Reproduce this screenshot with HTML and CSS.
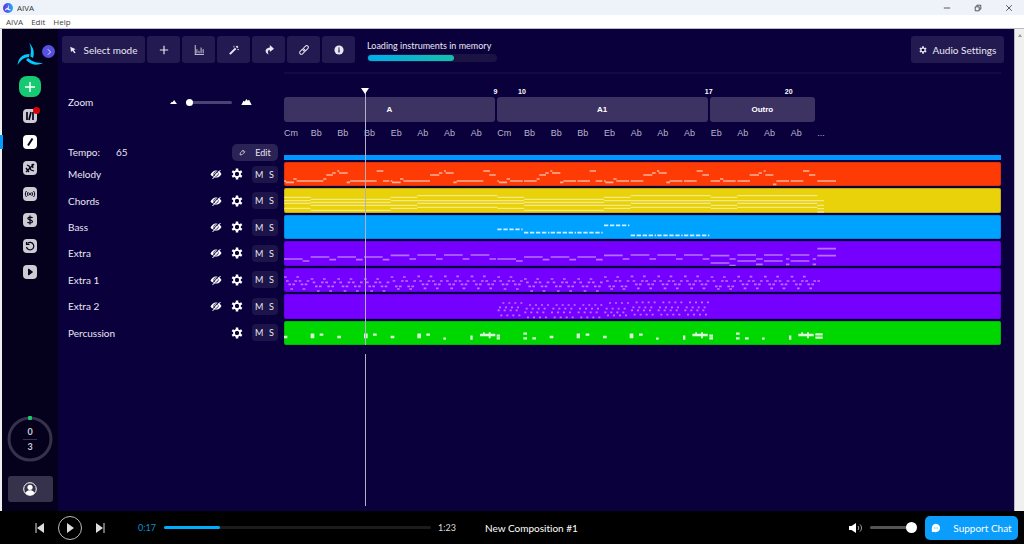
FILE: index.html
```
<!DOCTYPE html>
<html lang="en">
<head>
    <meta charset="UTF-8">
    <meta name="viewport" content="width=device-width, initial-scale=1.0">
    <title>AIVA</title>
    <link rel="stylesheet" href="styles.css">
</head>
<body>

<!-- Shared icons -->
<svg class="defs" aria-hidden="true">
    <symbol id="gear" viewBox="0 0 24 24">
        <path fill="none" stroke="currentColor" stroke-width="4" d="M12 5.500l5.600 3.250v6.500L12 18.500l-5.600-3.250v-6.500z"/>
        <path fill="none" stroke="currentColor" stroke-width="5" d="M12 1v5M12 18v5M2.500 6.500l4.300 2.500M17.200 15l4.300 2.500M21.500 6.500l-4.300 2.500M6.800 15l-4.300 2.500"/>
        <circle cx="12" cy="12" r="4" fill="#0a003c"/>
    </symbol>
    <symbol id="hide" viewBox="0 0 24 20">
        <path fill="currentColor" d="M1 11C5 4 9 3 12 3s8 1 11 7c-3 6-8 7-11 7S4 16 1 11z"/>
        <circle cx="12" cy="10" r="4.500" fill="none" stroke="#0a003c" stroke-width="1.500"/>
        <path stroke="#0a003c" stroke-width="2" d="M4 17L19 1"/>
        <path stroke="currentColor" stroke-width="2" d="M5 20L21 2"/>
    </symbol>
</svg>

<header class="titlebar">
    <svg class="app-icon" viewBox="0 0 20 20">
        <defs>
            <linearGradient id="appfill" x1="0" x2="1"><stop offset="0" stop-color="#6a2be8"/><stop offset="1" stop-color="#1fb0f5"/></linearGradient>
        </defs>
        <circle cx="10" cy="10" r="10" fill="url(#appfill)"/>
        <path fill="#fff" d="M10 3c2 3 2 5 1 8l5 3c-3 1-5 0-7-1-2 0-3 1-5 2 0-3 2-5 5-5 1-2 2-4 1-7z"/>
    </svg>
    <span class="app-name">AIVA</span>
    <div class="window-buttons">
        <button aria-label="Minimize"><svg viewBox="0 0 10 10"><path d="M1 5h8"/></svg></button>
        <button aria-label="Restore"><svg viewBox="0 0 10 10"><path d="M1.500 3.500h5v5h-5zM3.500 3V1.500h5v5H7"/></svg></button>
        <button aria-label="Close"><svg viewBox="0 0 10 10"><path d="M1.500 1.500l7 7M8.500 1.500l-7 7"/></svg></button>
    </div>
</header>

<nav class="menubar">
    <a href="#">AIVA</a>
    <a href="#">Edit</a>
    <a href="#">Help</a>
</nav>

<div class="app">
    <aside class="sidebar">
        <div class="logo">
            <svg viewBox="0 0 52 48">
                <path fill="#0cf" d="M24 1c8 9 12 18 8 31l-5-3c1-10 2-18-3-28z"/>
                <path fill="#0cf" d="M1 46c2-14 9-22 24-22l-1 6C13 31 8 36 1 46z"/>
                <path fill="#0cf" d="M52 42c-12 6-24 4-34-6l4-4c9 8 18 10 30 10z"/>
            </svg>
            <button class="expand" aria-label="Expand menu"><svg viewBox="0 0 10 10"><path d="M3.500 1.500L7 5 3.500 8.500"/></svg></button>
        </div>
        <button class="create" aria-label="Create"><svg viewBox="0 0 12 12"><path d="M6 1v10M1 6h10"/></svg></button>
        <div class="side-links">
            <button aria-label="Library"><svg viewBox="0 0 14 14"><path stroke-width="1.700" d="M4 3v8M6 11l2-8M10 3v8"/></svg><i class="dot"></i></button>
            <button class="active" aria-label="Editor"><svg viewBox="0 0 14 14"><path stroke-width="2" d="M5 10.500L9.500 3.500"/></svg></button>
            <button aria-label="Styles"><svg viewBox="0 0 14 14"><path stroke-width="1.300" d="M3 11l8-8M4 4l2 1 2 4 3 1M3 7l3 4M9 3l1 4"/></svg></button>
            <button aria-label="Radio"><svg viewBox="0 0 14 14"><path d="M3.500 4c-1.600 1.800-1.600 4.200 0 6M5.300 5c-1 1.200-1 2.800 0 4M10.500 4c1.600 1.800 1.600 4.200 0 6M8.700 5c1 1.200 1 2.800 0 4"/><circle cx="7" cy="7" r=".8"/></svg></button>
            <button aria-label="Pricing"><svg viewBox="0 0 14 14"><path stroke-width="1.200" d="M9.500 5C9 3.800 5 3.500 4.800 5.300 4.800 7.500 9.500 6.300 9.500 8.700 9.300 10.500 5 10.300 4.500 9M7 2.500v9"/></svg></button>
            <button aria-label="History"><svg viewBox="0 0 14 14"><path stroke-width="1.200" d="M4.500 4.500a3.700 3.700 0 1 1-1 3.500M3.500 3v2.500H6.500"/></svg></button>
            <button aria-label="Tutorials"><svg viewBox="0 0 14 14"><path fill="currentColor" d="M5.500 4v6L9.500 7z"/></svg></button>
        </div>
        <div class="quota">
            <svg viewBox="0 0 46 46"><circle cx="23" cy="23" r="21" fill="none" stroke="#37324b" stroke-width="3"/><rect x="21" y="0" width="4" height="4" rx="1" fill="#1bc96f"/></svg>
            <span class="used">0</span>
            <span>3</span>
        </div>
        <button class="account" aria-label="Account">
            <svg viewBox="0 0 14 14"><circle cx="7" cy="7" r="6.300" fill="none" stroke="#fff"/><circle cx="7" cy="5.300" r="2.600" fill="#fff"/><path fill="#fff" d="M2.300 11c1.500-2.200 3-2.700 4.700-2.700s3.200.5 4.700 2.700c-2 3-7.400 3-9.400 0z"/></svg>
        </button>
    </aside>

    <main class="editor">
        <div class="toolbar">
            <button class="tool wide"><svg viewBox="0 0 12 12"><path fill="currentColor" d="M2 1l8 4-3 1 3 4-2 1-3-4-2 2z"/></svg>Select mode</button>
            <button class="tool" aria-label="Add"><svg viewBox="0 0 12 12"><path fill="none" stroke="currentColor" stroke-width="1.400" d="M6 1v10M1 6h10"/></svg></button>
            <button class="tool" aria-label="Velocity"><svg viewBox="0 0 12 12"><path fill="none" stroke="currentColor" d="M1.500 0v11.500M3.500 5v5M6 7v3M8.500 3v7M11 5v5M1 11.500h11"/></svg></button>
            <button class="tool" aria-label="Magic"><svg viewBox="0 0 12 12"><path fill="none" stroke="currentColor" stroke-width="2.400" d="M1 11L8 4M9 3l1.500-1.500"/><path stroke="currentColor" d="M6 1v2M10 5.500h2"/></svg></button>
            <button class="tool" aria-label="Redo"><svg viewBox="0 0 12 12"><path fill="currentColor" d="M7 0l5 4.500L7 8.500V6C4.500 6 4 8 5.500 11.500 1 9.500 0 4 7 3z"/></svg></button>
            <button class="tool" aria-label="Link"><svg viewBox="0 0 12 12"><g fill="none" stroke="currentColor" stroke-width="1.200" transform="rotate(-45 6 6)"><rect x="-.5" y="4" width="7.500" height="4" rx="2"/><rect x="5" y="4" width="7.500" height="4" rx="2"/></g></svg></button>
            <button class="tool" aria-label="Info"><svg viewBox="0 0 12 12"><circle cx="6" cy="6" r="5.500" fill="currentColor"/><path stroke="#221a50" stroke-width="1.500" d="M6 5.200V9M6 3v1.400"/></svg></button>
            <div class="loading">
                <span id="loading-label">Loading instruments in memory</span>
                <div class="loading-bar" role="progressbar" aria-labelledby="loading-label" aria-valuenow="67"><div class="loading-fill"></div></div>
            </div>
            <button class="tool settings"><svg viewBox="0 0 24 24"><use href="#gear"/></svg>Audio Settings</button>
        </div>

        <div class="timeline">
            <div class="row ruler">
                <div class="head zoom">
                    <label for="zoom">Zoom</label>
                    <svg class="hill small" viewBox="0 0 12 7"><path d="M0 7l3-4 1.500 1L7 0l5 7z"/></svg>
                    <input type="range" id="zoom" min="0" max="100" value="0">
                    <svg class="hill" viewBox="0 0 12 7"><path d="M0 7l2.500-5 1.500 1 2-3 1.500 2L9 1l3 6z"/></svg>
                </div>
                <div class="lane-top">
                    <div class="bars">
                        <span class="bar-9">9</span><span class="bar-10">10</span><span class="bar-17">17</span><span class="bar-20">20</span>
                    </div>
                    <div class="sections">
                        <button>A</button><button>A1</button><button>Outro</button>
                    </div>
                    <div class="chord-names">
                        <span>Cm</span><span>Bb</span><span>Bb</span><span>Bb</span><span>Eb</span><span>Ab</span><span>Ab</span><span>Ab</span>
                        <span>Cm</span><span>Bb</span><span>Bb</span><span>Bb</span><span>Eb</span><span>Ab</span><span>Ab</span><span>Ab</span>
                        <span>Eb</span><span>Ab</span><span>Ab</span><span>Ab</span><span class="more">...</span>
                    </div>
                </div>
            </div>
            <div class="row tempo">
                <div class="head">
                    <span class="tempo-label">Tempo:</span><span>65</span>
                    <button class="edit"><svg viewBox="0 0 10 10"><path fill="none" stroke="currentColor" d="M1.500 8.500l.5-3 4-4L8.500 4l-4 4zM5 2.500L7.500 5"/></svg>Edit</button>
                </div>
                <div class="tempo-line"></div>
            </div>
            <div class="tracks" id="tracks"></div>
            <div class="playhead"><i></i></div>
            <div class="playhead-lower"></div>
        </div>
    </main>
    <div class="scrollbar"><i></i></div>
</div>

<footer class="player">
    <button class="skip" aria-label="Previous"><svg viewBox="0 0 10 12"><path d="M1 1v10" stroke="currentColor"/><path fill="currentColor" d="M9 1v10L2 6z"/></svg></button>
    <button class="play" aria-label="Play"><svg viewBox="0 0 10 12"><path fill="currentColor" d="M2 1v10l7-5z"/></svg></button>
    <button class="skip" aria-label="Next"><svg viewBox="0 0 10 12"><path d="M9 1v10" stroke="currentColor"/><path fill="currentColor" d="M1 1v10l7-5z"/></svg></button>
    <span class="now">0:17</span>
    <div class="seek"><div class="seek-fill"></div></div>
    <span class="total">1:23</span>
    <span class="song">New Composition #1</span>
    <svg class="speaker" viewBox="0 0 14 10"><path fill="#fff" d="M0 3h2.500L7 0v10L2.500 7H0z"/><path fill="none" stroke="#aaa" d="M9 3c1 1.200 1 2.800 0 4M11 1.500c2 2 2 5 0 7"/></svg>
    <input type="range" class="volume" aria-label="Volume" min="0" max="100" value="100">
    <button class="support"><svg viewBox="0 0 12 12"><path fill="#fff" d="M6 1a5 5 0 1 1-2.500 9.400L1 11V6a5 5 0 0 1 5-5z"/><path stroke="#0a9dfb" stroke-dasharray="1 1" d="M3.500 6h5"/></svg>Support Chat</button>
</footer>

<script src="script.js"></script>
</body>
</html>
```
FILE: styles.css
```
* {
    box-sizing: border-box;
}
body {
    margin: 0;
    min-height: 100vh;
    display: flex;
    flex-direction: column;
    font-family: Lato, sans-serif;
    font-size: 10px;
    font-variant-ligatures: none;
    color: #e9e7f2;
    background-color: #000;
}
button {
    font: inherit;
    font-variant-ligatures: none;
    color: inherit;
    border: none;
    padding: 0;
    background: none;
    cursor: pointer;
    display: flex;
    align-items: center;
    justify-content: center;
}
svg {
    display: block;
    flex: none;
}
.defs {
    position: absolute;
    width: 0;
    height: 0;
}

/* Window chrome */
.titlebar {
    display: flex;
    align-items: center;
    height: 15px;
    padding: 0 11px 0 3px;
    background-color: #edf3f8;
    color: #333;
    font-family: "Open Sans", sans-serif;
    font-size: 8px;
}
.app-icon {
    width: 10px;
    height: 10px;
    margin-right: 4px;
}
.window-buttons {
    display: flex;
    gap: 23px;
    margin-left: auto;
}
.window-buttons svg {
    width: 8px;
    height: 8px;
    fill: none;
    stroke: #333;
}
.menubar {
    display: flex;
    align-items: center;
    gap: 8px;
    height: 14px;
    padding-left: 6px;
    background-color: #fff;
    border-bottom: 1px solid #b9bcc4;
    font-family: "Open Sans", sans-serif;
    font-size: 8px;
}
.menubar a {
    color: #444;
    text-decoration: none;
}

.app {
    flex: 1;
    display: flex;
    border-left: 2px solid #eef0f0;
}

/* Sidebar */
.sidebar {
    width: 56px;
    display: flex;
    flex-direction: column;
    align-items: center;
    padding: 13px 0 9px;
    background-color: #05001c;
}
.logo {
    position: relative;
    width: 26px;
}
.logo > svg {
    width: 26px;
    height: 24px;
}
.expand {
    position: absolute;
    top: 3px;
    left: 25px;
    width: 13px;
    height: 13px;
    border-radius: 50%;
    background-color: #5750e0;
}
.expand svg {
    width: 8px;
    height: 8px;
    fill: none;
    stroke: #fff;
}
.create {
    width: 22px;
    height: 21px;
    margin-top: 10px;
    border-radius: 8px;
    background-color: #17c973;
}
.create svg {
    width: 12px;
    height: 12px;
    fill: none;
    stroke: #fff;
    stroke-width: 1.500;
}
.side-links {
    width: 100%;
    display: flex;
    flex-direction: column;
    margin-top: 6px;
}
.side-links button {
    position: relative;
    height: 26px;
}
.side-links svg {
    width: 14px;
    height: 14px;
    border-radius: 4px;
    background-color: #cdccd3;
    color: #05001c;
    fill: none;
    stroke: #05001c;
}
.side-links .active svg {
    background-color: #fff;
}
.side-links .active::before {
    content: "";
    position: absolute;
    left: -2px;
    top: 6px;
    width: 3px;
    height: 14px;
    background-color: #009dff;
}
.dot {
    position: absolute;
    top: 4px;
    left: 31px;
    width: 7px;
    height: 7px;
    border-radius: 50%;
    background-color: #d60505;
}
.quota {
    position: relative;
    display: flex;
    flex-direction: column;
    align-items: center;
    justify-content: center;
    width: 46px;
    height: 46px;
    margin-top: auto;
    font-size: 9px;
    font-weight: bold;
    line-height: 14px;
    color: #cfcdd8;
}
.quota svg {
    position: absolute;
    top: 0;
    left: 0;
    width: 46px;
    height: 46px;
}
.used {
    width: 14px;
    text-align: center;
    border-bottom: 1px solid #37324b;
}
.account {
    width: 45px;
    height: 26px;
    margin-top: 14px;
    border-radius: 3px;
    background-color: #37324b;
}
.account svg {
    width: 14px;
    height: 14px;
}

/* Editor */
.editor {
    flex: 1;
    min-width: 0;
    background-color: #0a003c;
}
.toolbar {
    display: flex;
    align-items: flex-start;
    gap: 2px;
    padding: 7px 10px 9px 4px;
}
.tool {
    width: 33px;
    height: 27px;
    border-radius: 3px;
    background-color: #221a50;
    white-space: nowrap;
}
.tool svg {
    width: 10px;
    height: 10px;
}
.tool.wide {
    width: 83px;
}
.tool.wide svg {
    width: 8px;
    height: 8px;
    margin-right: 6px;
}
.tool.settings {
    width: 93px;
    margin-left: auto;
}
.tool.settings svg {
    width: 8px;
    height: 8px;
    margin-right: 6px;
}
.loading {
    width: 130px;
    margin: 3px 0 0 10px;
    font-size: 9px;
    line-height: 13px;
    white-space: nowrap;
}
.loading-bar {
    height: 8px;
    padding: 1px;
    border-radius: 4px;
    background-color: #1b1344;
    margin-top: 2px;
}
.loading-fill {
    width: 67%;
    height: 6px;
    border-radius: 3px;
    background: linear-gradient(to right, #00aeea, #12bfae);
}
.timeline {
    position: relative;
    padding-right: 13px;
}
.row {
    display: flex;
}
.head {
    width: 226px;
    flex: none;
    display: flex;
    align-items: center;
    padding: 0 6px 0 10px;
}
.zoom {
    align-self: flex-start;
    height: 14px;
    margin-top: 23px;
}
.zoom label {
    width: 102px;
}
.hill {
    width: 11px;
    height: 6px;
    fill: #fff;
}
.hill.small {
    width: 7px;
    height: 4px;
}
input[type="range"] {
    appearance: none;
    width: 46px;
    height: 12px;
    margin: 0 9px;
    background: none;
}
input[type="range"]::-webkit-slider-runnable-track {
    height: 3px;
    border-radius: 2px;
    background-color: #4b4374;
}
input[type="range"]::-webkit-slider-thumb {
    appearance: none;
    width: 7px;
    height: 7px;
    margin-top: -2px;
    border-radius: 50%;
    background-color: #fff;
}
.lane-top {
    flex: 1;
    height: 71px;
    padding-top: 13px;
    border-top: 2px solid #130a43;
    font-family: "Liberation Sans", sans-serif;
}
.bars {
    display: grid;
    grid-template-columns: repeat(42, 1fr);
    width: 560px;
    margin-left: -2px;
    font-size: 7px;
    font-weight: bold;
    line-height: 10px;
    text-align: center;
    color: #fff;
}
.bar-9 {
    grid-column: 16 / 18;
}
.bar-10 {
    grid-column: 18 / 20;
}
.bar-17 {
    grid-column: 32 / 34;
}
.bar-20 {
    grid-column: 38 / 40;
}
.sections {
    display: grid;
    grid-template-columns: 8fr 8fr 4fr;
    gap: 2px;
    width: 531px;
}
.sections button {
    height: 25px;
    border-radius: 3px;
    background-color: #3d3363;
    color: #fff;
    font-size: 8px;
    font-weight: bold;
}
.chord-names {
    display: grid;
    grid-template-columns: repeat(21, 1fr);
    width: 560px;
    margin-top: 5px;
    font-size: 9px;
    line-height: 12px;
    color: #b9b5cb;
}
.tempo {
    height: 18px;
    margin-bottom: 1px;
}
.tempo-label {
    width: 48px;
}
.edit {
    width: 46px;
    height: 17px;
    gap: 9px;
    margin-left: auto;
    border-radius: 5px;
    background-color: #2b2355;
    font-size: 9px;
}
.edit svg {
    width: 7px;
    height: 7px;
}
.tempo-line {
    flex: 1;
    align-self: flex-end;
    height: 5px;
    margin-bottom: 1px;
    background-color: #0096ff;
}
.tracks {
    display: grid;
    grid-template-rows: repeat(7, minmax(0, 1fr));
    height: 185px;
}
.tracks .row {
    padding-bottom: 2px;
}
.track-name {
    flex: 1;
}
.icon-button {
    width: 12px;
    margin-right: 9px;
    color: #fff;
}
.icon-button svg {
    width: 12px;
    height: 12px;
}
.mute-solo {
    display: flex;
    justify-content: space-between;
    width: 26px;
    height: 17px;
    padding: 0 4px 0 3px;
    border-radius: 4px;
    background-color: #1d154a;
    font-size: 9px;
}
.lane {
    flex: 1;
    min-width: 0;
    border-radius: 2px;
    overflow: hidden;
    box-shadow: inset 0 0 0 1px rgba(0, 0, 80, 0.15);
}
.lane svg {
    width: 717px;
    height: 25px;
}
.lane path {
    fill: none;
    stroke: #fff;
    stroke-width: 5;
    stroke-opacity: 0.6;
}
.melody {
    background-color: #ff3b05;
}
.chords {
    background-color: #e9d20a;
}
.chords path {
    stroke-width: 4;
    stroke-opacity: 0.5;
}
.bass {
    background-color: #00a2ff;
}
.bass path {
    stroke-dasharray: 13 5;
    stroke-opacity: 0.8;
}
.extra {
    background-color: #7600ff;
}
.extra path {
    stroke-opacity: 0.45;
}
.percussion {
    background-color: #00d600;
}
.percussion path {
    stroke-width: 7;
    stroke-opacity: 0.85;
}
.playhead,
.playhead-lower {
    position: absolute;
    left: 307px;
    width: 1px;
    background-color: #b3afc6;
}
.playhead {
    top: 16px;
    height: 257px;
}
.playhead i {
    position: absolute;
    top: 0;
    left: -4px;
    border: 4px solid transparent;
    border-top: 6px solid #fff;
    border-bottom: none;
}
.playhead-lower {
    top: 282px;
    height: 152px;
}
.scrollbar {
    width: 10px;
    padding: 5px 0 0 3px;
    border-left: 1px solid #b9bcc4;
    background-color: #f0f0f0;
}
.scrollbar i {
    display: block;
    width: 4px;
    border: 2px solid transparent;
    border-top: none;
    border-bottom: 3px solid #999;
}

/* Player */
.player {
    display: flex;
    align-items: center;
    height: 33px;
    padding: 0 6px 0 35px;
    color: #ddd;
}
.skip svg,
.play svg {
    width: 10px;
    height: 12px;
}
.play {
    width: 24px;
    height: 24px;
    margin: 0 13px;
    border: 1px solid #bbb;
    border-radius: 50%;
}
.now {
    width: 19px;
    margin-left: 33px;
    font-size: 9px;
    color: #0a8fd0;
}
.seek {
    flex: 1;
    max-width: 267px;
    height: 3px;
    margin: 0 7px;
    border-radius: 2px;
    background-color: #1c1c1c;
}
.seek-fill {
    width: 21%;
    height: 3px;
    border-radius: 2px;
    background-color: #00aeff;
}
.total {
    font-size: 9px;
    width: 47px;
}
.song {
    color: #fff;
}
.speaker {
    width: 14px;
    height: 10px;
    margin-left: auto;
}
input.volume {
    width: 47px;
    margin: 0 8px 0 7px;
}
input.volume::-webkit-slider-runnable-track {
    background-color: #555;
}
input.volume::-webkit-slider-thumb {
    width: 11px;
    height: 11px;
    margin-top: -4px;
}
.support {
    gap: 12px;
    width: 93px;
    height: 24px;
    border-radius: 5px;
    background-color: #0a9dfb;
    color: #fff;
    white-space: nowrap;
}
.support svg {
    width: 10px;
    height: 10px;
}
```
FILE: script.js
```
// One bar is 80 units wide. A note is [start, pitch offset, length].
const BAR = 80;

function toPath(notes) {
    return notes.map(([x, y, w]) => `M${x} ${y}h${w}`).join('');
}

// Repeats a figure over a range of bars, rows[i] holds the starts played at pitches[i]
function figure(from, to, pitches, rows, length) {
    const notes = [];
    for (let bar = from; bar < to; bar++) {
        pitches.forEach((y, i) => rows[i].forEach((x) => notes.push([bar * BAR + x, y, length])));
    }
    return notes;
}

const melody = [
    [0, 57, 6], [5, 61, 25], [28, 51, 10], [38, 57, 80], [118, 51, 9], [127, 39, 20], [145, 33, 10], [160, 27, 6],
    [165, 33, 26], [188, 61, 10], [198, 57, 80], [278, 27, 20], [297, 57, 19], [320, 57, 5], [324, 61, 26],
    [348, 51, 10], [358, 57, 80], [438, 39, 28], [465, 33, 10], [480, 27, 6], [485, 33, 24], [508, 61, 10],
    [518, 57, 80], [598, 27, 20], [616, 39, 19], [640, 57, 5], [645, 61, 24], [668, 51, 10], [678, 57, 38],
    [720, 57, 38], [758, 51, 9], [766, 39, 20], [784, 33, 10], [799, 27, 6], [804, 33, 25], [828, 61, 10],
    [838, 57, 38], [880, 57, 38], [917, 27, 19], [935, 57, 20], [960, 57, 5], [964, 61, 24], [988, 51, 10],
    [997, 57, 38], [1040, 57, 38], [1078, 39, 27], [1104, 33, 11], [1119, 27, 7], [1124, 33, 24], [1147, 61, 11],
    [1157, 57, 38], [1200, 57, 38], [1238, 27, 18], [1255, 39, 20], [1280, 57, 28], [1308, 51, 10], [1317, 57, 38],
    [1360, 57, 38], [1397, 39, 28], [1424, 33, 10], [1439, 27, 6], [1444, 39, 24], [1467, 67, 10], [1477, 57, 38],
    [1520, 57, 38], [1557, 27, 19], [1575, 39, 19], [1600, 57, 56]
];

const cm = [28, 38, 46, 61];
const bb = [34, 43, 52, 67];
const eb = [28, 38, 52, 61];
const ab = [23, 38, 46, 58];
const chords = [
    [0, 1, cm], [1, 4, bb], [4, 5, eb], [5, 8, ab], [8, 9, cm], [9, 12, bb], [12, 13, eb], [13, 16, ab],
    [16, 17, eb], [17, 20, ab], [20, 20.25, [38, 52, 62, 72]]
].flatMap(([from, to, pitches]) => pitches.map((y) => [from * BAR, y, (to - from) * BAR]));

const bass = [43, 53, 53, 53, 31, 61, 61, 61].map((y, i) => [(8 + i) * BAR, y, 76]);

const extra = [];
[0, 8].forEach((first) => {
    [[54, 60], [48, 56], [48, 56], [48, 56], [43, 54], [42, 54], [42, 54], [42, 54]].forEach(([a, b], i) => {
        const x = (first + i) * BAR;
        extra.push([x, a, 56], [x + 56, b, 20]);
    });
});
extra.push([1280, 44, 56], [1280, 66, 56], [1336, 54, 19], [1336, 74, 19]);
[[1360, 56, 20], [1440, 66, 10], [1520, 66, 10]].forEach(([x, at, w]) => {
    extra.push([x, 42, 56], [x, 60, 56], [x + at, 54, w], [x + at, 70, w]);
});
extra.push([1600, 23, 56], [1600, 44, 56]);

const arp = [[0, 37], [6, 31, 44, 68], [13, 25, 50, 62], [19, 56]];
const extra1 = [
    [0, 1, [27, 39, 49, 63]], [1, 4, [33, 43, 55, 69]], [4, 5, [27, 39, 55, 63]], [5, 8, [25, 39, 49, 61]],
    [8, 9, [27, 39, 49, 63]], [9, 12, [33, 43, 55, 69]], [12, 13, [27, 39, 55, 63]], [13, 16, [25, 39, 49, 61]],
    [16, 17, [27, 39, 55, 63]], [17, 20, [26, 39, 49, 61]]
].flatMap(([from, to, pitches]) => figure(from, to, pitches, arp, 8));
extra1.push([1600, 39, 8]);

const fast = [[15, 33, 51, 69], [5, 23, 41, 59], [1, 19, 37, 55], [9, 27, 45, 63]];
const extra2 = [
    [8, 9, [27, 40, 49, 64]], [9, 12, [33, 44, 55, 70]], [12, 13, [27, 44, 55, 64]], [13, 16, [25, 40, 49, 62]]
].flatMap(([from, to, pitches]) => figure(from, to, pitches, fast, 6));

const fill = [[588, 42, 46], [597, 37, 5], [614, 37, 6], [614, 48, 6]];
const percussion = [
    [0, 48, 10], [80, 41, 11], [80, 48, 11], [107, 41, 11], [160, 48, 11], [240, 41, 11], [240, 48, 11],
    [267, 41, 11], [320, 48, 11], [400, 41, 11], [400, 48, 11], [427, 41, 11], [478, 53, 8], [559, 47, 7], [559, 53, 7],
    [638, 44, 10], [638, 52, 10], [718, 38, 11], [718, 52, 11], [745, 52, 11], [797, 48, 11], [878, 41, 10],
    [878, 48, 10], [905, 41, 11], [957, 48, 11], [1037, 41, 11], [1037, 48, 11], [1065, 41, 11], [1116, 53, 8],
    [1197, 47, 7], [1197, 53, 7], [1276, 44, 11], [1276, 52, 11], [1356, 38, 11], [1356, 52, 11], [1383, 52, 11],
    [1434, 53, 8], [1515, 47, 7], [1515, 53, 7], [1594, 40, 22], [1594, 50, 22]
];
[0, 637, 955].forEach((shift) => fill.forEach(([x, y, w]) => percussion.push([x + shift, y, w])));

const tracks = [
    { name: 'Melody', type: 'melody', notes: melody },
    { name: 'Chords', type: 'chords', notes: chords },
    { name: 'Bass', type: 'bass', notes: bass },
    { name: 'Extra', type: 'extra', notes: extra },
    { name: 'Extra 1', type: 'extra', notes: extra1 },
    { name: 'Extra 2', type: 'extra', notes: extra2 },
    { name: 'Percussion', type: 'percussion', notes: percussion }
];

const list = document.getElementById('tracks');
tracks.forEach((track) => {
    const hide = track.type === 'percussion' ? '' :
        '<button class="icon-button" aria-label="Hide"><svg><use href="#hide"/></svg></button>';
    const row = document.createElement('div');
    row.className = 'row';
    row.innerHTML = `
        <div class="head">
            <span class="track-name">${track.name}</span>
            ${hide}
            <button class="icon-button" aria-label="Settings"><svg><use href="#gear"/></svg></button>
            <div class="mute-solo"><button>M</button><button>S</button></div>
        </div>
        <div class="lane ${track.type}"><svg viewBox="0 0 2151 75"><path d="${toPath(track.notes)}"/></svg></div>
    `;
    list.appendChild(row);
});
```
